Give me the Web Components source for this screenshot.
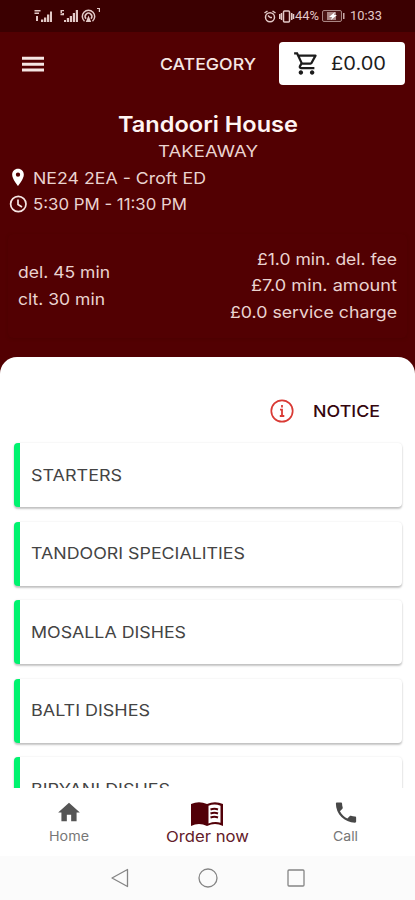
<!DOCTYPE html>
<html lang="en">
<head>
<meta charset="UTF-8">
<meta name="viewport" content="width=device-width, initial-scale=1.0">
<title>Tandoori House</title>
<style>
    body {
        margin: 0;
        background: #fff;
        font-family: Inter, "Open Sans", sans-serif;
    }
</style>
</head>
<body>
<takeaway-app></takeaway-app>

<script>
// One line of text, its letters widened so that it fills the given width
class WideText extends HTMLElement {

    constructor() {
        super();
        this.shadowDOM = this.attachShadow({ mode: "open" });
    }

    connectedCallback() {
        this.shadowDOM.innerHTML = `
            <style>
                :host {
                    display: block;
                    flex: none;
                    white-space: nowrap;
                    width: ${this.getAttribute("width")}px;
                }

                span {
                    display: inline-block;
                    vertical-align: top;
                    transform-origin: left;
                }
            </style>
            <span><slot></slot></span>
        `;
        const span = this.shadowDOM.querySelector("span");
        const natural = span.getBoundingClientRect().width;
        span.style.transform = `scaleX(${this.getAttribute("width") / natural})`;
    }
}

class StatusBar extends HTMLElement {

    constructor() {
        super();
        this.shadowDOM = this.attachShadow({ mode: "open" });
    }

    connectedCallback() {
        this.shadowDOM.innerHTML = `
            <style>
                :host {
                    display: flex;
                    height: 32px;
                    box-sizing: border-box;
                    padding: 0 33px 0 34px;
                    align-items: center;
                    background: #3b0001;
                    color: #e3c9c7;
                    font: 13px/32px Roboto, sans-serif;
                }
                svg { display: block; flex: none; }
                .signal { margin-right: auto; }
                .alarm { margin-right: 3px; }
                .battery { margin: 0 5px 0 3px; }
            </style>
            <svg class="signal" width="68" height="18" viewBox="0 0 68 18" fill="currentColor">
                <path d="M.5 3h6v1.500h-6zM.5 5.500H5V7H.5zM2 9h2v5H2zM7 12.500h2.300V15H7zM10 10.500h2.300V15H10zM13 7.500h2.300V15H13zM16 4.500h2V15h-2z"/>
                <path d="M26.500 3H30v1.200h-2V6h2v2.300h-3.500V7H28.500v-.5h-2zM30 13h2v2h-2zM32.800 11h2.200v4h-2.200zM35.800 9H38v6h-2.200zM38.800 6H41v9h-2.200zM41.800 3h2.200v12h-2.200z"/>
                <g fill="none" stroke="currentColor" stroke-width="1.500">
                    <path d="M50.500 14.200a6.200 6.200 0 1 1 8 0M52 11.700a3.300 3.300 0 1 1 5 0"/>
                </g>
                <path d="M54.500 8.500l2.700 6.500h-5.400zM63 1h3v4h-1.200V2H63z"/>
            </svg>
            <svg class="alarm" width="12" height="13" viewBox="0 0 12 13" fill="none" stroke="currentColor" stroke-width="1.500">
                <circle cx="6" cy="7.200" r="4.500"/>
                <path d="M.5 3l3-2M11.500 3l-3-2M6 7.500L4 5.500M6 7.500h2"/>
            </svg>
            <svg width="16" height="13" viewBox="0 0 16 13" fill="none" stroke="currentColor" stroke-width="1.500">
                <rect x="4.500" y="1" width="6" height="11" rx="1"/>
                <path d="M2.500 3v7M.7 4v5M12.700 3v7M14.500 4v5"/>
            </svg>
            <wide-text width="24">44%</wide-text>
            <svg class="battery" width="23" height="12" viewBox="0 0 23 12">
                <rect x=".5" y=".5" width="19" height="11" rx="1.500" fill="#4b1413" stroke="#a98583"/>
                <path d="M5 2h9v8H5z" fill="#a98583"/>
                <path d="M13 2L7 7h3l-1 3 6-5h-3z" fill="#fff"/>
                <path d="M21 3h1.500v6H21z" fill="#c9aaa8"/>
            </svg>
            <wide-text width="32">10:33</wide-text>
        `;
    }
}

class AppBar extends HTMLElement {

    constructor() {
        super();
        this.shadowDOM = this.attachShadow({ mode: "open" });
    }

    connectedCallback() {
        this.shadowDOM.innerHTML = `
            <style>
                :host {
                    display: flex;
                    height: 63px;
                    box-sizing: border-box;
                    padding: 0 10.500px 0 22px;
                    align-items: center;
                    color: #f6e6e4;
                }
                svg { display: block; flex: none; }
                .category {
                    margin: 0 22.500px 0 auto;
                    font-size: 16.500px;
                    font-weight: 500;
                }
                .cart {
                    display: flex;
                    box-sizing: border-box;
                    width: 126px;
                    height: 43px;
                    padding-left: 14px;
                    align-items: center;
                    gap: 11px;
                    border-radius: 4px;
                    background: #fff;
                    color: #1c1c1c;
                    font-size: 18px;
                }
            </style>
            <svg width="22" height="16" viewBox="0 0 22 16" fill="currentColor">
                <path d="M0 .8h22v3H0zM0 6.700h22v3H0zM0 12.600h22v3H0z"/>
            </svg>
            <wide-text class="category" width="96">CATEGORY</wide-text>
            <div class="cart">
                <svg width="27" height="27" viewBox="0 0 24 24" fill="currentColor">
                    <path d="M15.550 13c.75 0 1.410-.41 1.750-1.030l3.580-6.490A.996.996 0 0 0 20.010 4H5.210l-.94-2H1v2h2l3.600 7.590-1.350 2.440C4.520 15.370 5.480 17 7 17h12v-2H7l1.100-2h7.450zM6.160 6h12.150l-2.760 5H8.530L6.160 6zM7 18c-1.100 0-1.990.9-1.990 2S5.900 22 7 22s2-.9 2-2-.9-2-2-2zm10 0c-1.100 0-1.990.9-1.990 2s.89 2 1.990 2 2-.9 2-2-.9-2-2-2z"/>
                </svg>
                <wide-text width="55">£0.00</wide-text>
            </div>
        `;
    }
}

class ShopInfo extends HTMLElement {

    constructor() {
        super();
        this.shadowDOM = this.attachShadow({ mode: "open" });
    }

    connectedCallback() {
        this.shadowDOM.innerHTML = `
            <style>
                :host {
                    display: block;
                    padding: 15px 8px 0;
                    color: #ead3d0;
                    font-size: 16.500px;
                    line-height: 26.500px;
                }
                .name {
                    margin: 0 auto;
                    color: #fff5f3;
                    font-size: 21.500px;
                    font-weight: 600;
                    line-height: 28px;
                }
                .kind { margin: 0 auto; }
                .row {
                    display: flex;
                    align-items: center;
                    gap: 5px;
                }
                svg { display: block; flex: none; }
                .terms {
                    display: flex;
                    height: 104px;
                    box-sizing: border-box;
                    margin-top: 16px;
                    padding: 0 10px;
                    justify-content: space-between;
                    align-items: center;
                    border-radius: 5px;
                    box-shadow: 0 1px 3px #45000280;
                }
                .right {
                    display: flex;
                    flex-direction: column;
                    align-items: flex-end;
                }
            </style>
            <wide-text class="name" width="180">Tandoori House</wide-text>
            <wide-text class="kind" width="100">TAKEAWAY</wide-text>
            <div class="row">
                <svg width="20" height="20" viewBox="0 0 24 24" fill="#fff">
                    <path d="M12 1C8 1 5 4.100 5 8c0 5.200 7 13.500 7 13.500S19 13.200 19 8c0-3.900-3-7-7-7zm0 9.500a2.600 2.600 0 1 1 0-5.200 2.600 2.600 0 0 1 0 5.200z"/>
                </svg>
                <wide-text width="173">NE24 2EA - Croft ED</wide-text>
            </div>
            <div class="row">
                <svg width="20" height="20" viewBox="0 0 20 20" fill="none" stroke="#f6e6e4" stroke-width="1.700">
                    <circle cx="10.300" cy="10" r="7.700"/>
                    <path d="M10 5.500v5l4 2.400"/>
                </svg>
                <wide-text width="154">5:30 PM - 11:30 PM</wide-text>
            </div>
            <div class="terms">
                <div>
                    <wide-text width="92">del. 45 min</wide-text>
                    <wide-text width="87">clt. 30 min</wide-text>
                </div>
                <div class="right">
                    <wide-text width="140">£1.0 min. del. fee</wide-text>
                    <wide-text width="146">£7.0 min. amount</wide-text>
                    <wide-text width="167">£0.0 service charge</wide-text>
                </div>
            </div>
        `;
    }
}

class MenuCategory extends HTMLElement {

    constructor() {
        super();
        this.shadowDOM = this.attachShadow({ mode: "open" });
    }

    connectedCallback() {
        this.shadowDOM.innerHTML = `
            <style>
                :host {
                    display: flex;
                    flex: none;
                    height: 64px;
                    box-sizing: border-box;
                    padding: 0 0 1px 11px;
                    align-items: center;
                    border-left: 6px solid #00f36f;
                    border-radius: 4px;
                    background: #fff;
                    box-shadow: 0 2px 2px #00000038, 0 0 2px #0000001c;
                    color: #444;
                    font-size: 16px;
                }
            </style>
            <slot></slot>
        `;
    }
}

class MenuSheet extends HTMLElement {

    constructor() {
        super();
        this.shadowDOM = this.attachShadow({ mode: "open" });
    }

    connectedCallback() {
        this.shadowDOM.innerHTML = `
            <style>
                :host {
                    display: block;
                    flex: 1;
                    min-height: 0;
                    overflow: hidden;
                    border-radius: 17px 17px 0 0;
                    background: #fff;
                }
                .notice {
                    display: flex;
                    height: 86px;
                    box-sizing: border-box;
                    padding: 22px 35px 0 0;
                    justify-content: flex-end;
                    align-items: center;
                    gap: 18px;
                    color: #35060e;
                    font-size: 16.500px;
                    font-weight: 500;
                }
                .list {
                    display: flex;
                    flex-direction: column;
                    gap: 14.500px;
                    padding: 0 13px 0 14px;
                }
            </style>
            <div class="notice">
                <svg width="26" height="26" viewBox="0 0 26 26" fill="none" stroke="#d93a35">
                    <circle cx="13" cy="13" r="10.700" stroke-width="1.700"/>
                    <path d="M13 7v2.500M11 11.700h2v6M10.800 18h4.500" stroke-width="1.800"/>
                </svg>
                <wide-text width="67">NOTICE</wide-text>
            </div>
            <div class="list">
                <menu-category><wide-text width="91">STARTERS</wide-text></menu-category>
                <menu-category><wide-text width="214">TANDOORI SPECIALITIES</wide-text></menu-category>
                <menu-category><wide-text width="155">MOSALLA DISHES</wide-text></menu-category>
                <menu-category><wide-text width="119">BALTI DISHES</wide-text></menu-category>
                <menu-category><wide-text width="139">BIRYANI DISHES</wide-text></menu-category>
            </div>
        `;
    }
}

class TabBar extends HTMLElement {

    constructor() {
        super();
        this.shadowDOM = this.attachShadow({ mode: "open" });
    }

    connectedCallback() {
        this.shadowDOM.innerHTML = `
            <style>
                :host {
                    display: grid;
                    grid-template-columns: repeat(3, 1fr);
                    flex: none;
                    height: 68.500px;
                    background: #fff;
                    color: #777;
                    font-size: 13px;
                    line-height: 20px;
                }
                .tab {
                    display: flex;
                    flex-direction: column;
                    align-items: center;
                    padding-top: 11px;
                }
                .active {
                    padding-top: 14px;
                    color: #632029;
                    font-size: 15px;
                }
                svg { display: block; height: 27px; flex: none; }
                .active svg { height: 25px; }
            </style>
            <div class="tab">
                <svg width="26" viewBox="0 0 24 24" fill="#555"><path d="M10 20v-6h4v6h5v-8h3L12 3 2 12h3v8z"/></svg>
                <wide-text width="40">Home</wide-text>
            </div>
            <div class="tab active">
                <svg width="32" viewBox="0 0 32 25" fill="#520008">
                    <path d="M0 2Q8-1.500 16 2 24-1.500 32 2v22q-8-4-16 0-8-4-16 0z"/>
                    <path d="M17.500 3.700q6-2.500 12 0v17q-6-1.500-12 .8z" fill="#fff"/>
                    <path d="M19.500 7.500q4-1.400 7.500 0M19.500 11.500q4-1.400 7.500 0M19.500 15.500q4-1.400 7.500 0" fill="none" stroke="#520008" stroke-width="2"/>
                </svg>
                <wide-text width="83">Order now</wide-text>
            </div>
            <div class="tab">
                <svg width="28" viewBox="0 0 24 24" fill="#484848"><path d="M6.620 10.790c1.440 2.830 3.760 5.140 6.590 6.590l2.200-2.200c.27-.27.67-.36 1.020-.24 1.120.37 2.330.57 3.570.57.55 0 1 .45 1 1V20c0 .55-.45 1-1 1-9.390 0-17-7.610-17-17 0-.55.45-1 1-1h3.500c.55 0 1 .45 1 1 0 1.250.2 2.450.57 3.570.11.35.03.74-.25 1.020l-2.200 2.200z"/></svg>
                <wide-text width="25">Call</wide-text>
            </div>
        `;
    }
}

class SystemNav extends HTMLElement {

    constructor() {
        super();
        this.shadowDOM = this.attachShadow({ mode: "open" });
    }

    connectedCallback() {
        this.shadowDOM.innerHTML = `
            <style>
                :host {
                    display: flex;
                    flex: none;
                    height: 44px;
                    box-sizing: border-box;
                    padding: 0 0 1px 0;
                    justify-content: center;
                    align-items: center;
                    gap: 68px;
                    background: #fbfbfb;
                }
                svg { display: block; fill: none; stroke: #858585; stroke-width: 1.300; }
            </style>
            <svg width="20" height="20"><path d="M17.500 1.500v17L2 10z" stroke-linejoin="round"/></svg>
            <svg width="20" height="20"><circle cx="10" cy="10" r="9"/></svg>
            <svg width="20" height="20"><rect x="2" y="2" width="16" height="16" rx="1"/></svg>
        `;
    }
}

class TakeawayApp extends HTMLElement {

    constructor() {
        super();
        this.shadowDOM = this.attachShadow({ mode: "open" });
    }

    connectedCallback() {
        this.shadowDOM.innerHTML = `
            <style>
                :host {
                    display: flex;
                    flex-direction: column;
                    width: 415px;
                    height: 900px;
                    overflow: hidden;
                    background: #520002;
                }
                .top { height: 357px; flex: none; }
            </style>
            <div class="top">
                <status-bar></status-bar>
                <app-bar></app-bar>
                <shop-info></shop-info>
            </div>
            <menu-sheet></menu-sheet>
            <tab-bar></tab-bar>
            <system-nav></system-nav>
        `;
    }
}

customElements.define("wide-text", WideText);
customElements.define("status-bar", StatusBar);
customElements.define("app-bar", AppBar);
customElements.define("shop-info", ShopInfo);
customElements.define("menu-category", MenuCategory);
customElements.define("menu-sheet", MenuSheet);
customElements.define("tab-bar", TabBar);
customElements.define("system-nav", SystemNav);
customElements.define("takeaway-app", TakeawayApp);
</script>
</body>
</html>
